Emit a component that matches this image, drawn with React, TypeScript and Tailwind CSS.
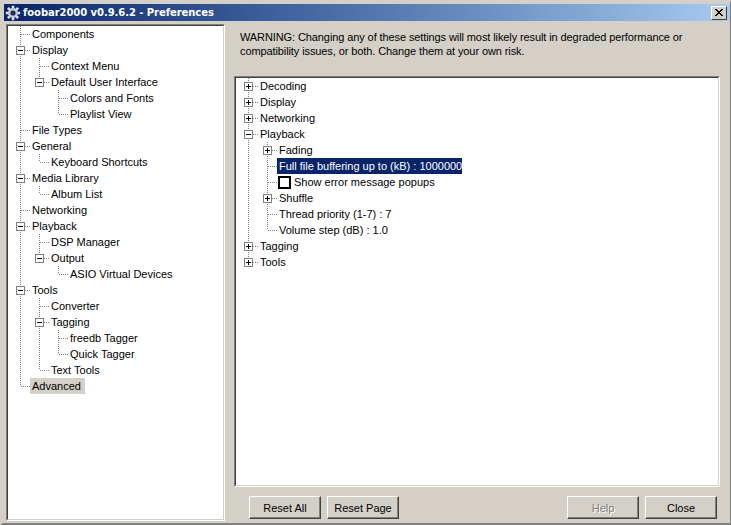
import type { ReactNode } from "react";

const FONT = "font-['Liberation_Sans',Arial,sans-serif]";

type Row = {
  label: string;
  // one flag per ancestor level: does that level's line carry on through this row
  guides: boolean[];
  last?: boolean;
  expander?: "plus" | "minus";
  selected?: "focus" | "dim";
  checkbox?: boolean;
};

const leftRows: Row[] = [
  { label: "Components", guides: [] },
  { label: "Display", guides: [], expander: "minus" },
  { label: "Context Menu", guides: [true] },
  { label: "Default User Interface", guides: [true], expander: "minus", last: true },
  { label: "Colors and Fonts", guides: [true, false] },
  { label: "Playlist View", guides: [true, false], last: true },
  { label: "File Types", guides: [] },
  { label: "General", guides: [], expander: "minus" },
  { label: "Keyboard Shortcuts", guides: [true], last: true },
  { label: "Media Library", guides: [], expander: "minus" },
  { label: "Album List", guides: [true], last: true },
  { label: "Networking", guides: [] },
  { label: "Playback", guides: [], expander: "minus" },
  { label: "DSP Manager", guides: [true] },
  { label: "Output", guides: [true], expander: "minus", last: true },
  { label: "ASIO Virtual Devices", guides: [true, false], last: true },
  { label: "Tools", guides: [], expander: "minus" },
  { label: "Converter", guides: [true] },
  { label: "Tagging", guides: [true], expander: "minus" },
  { label: "freedb Tagger", guides: [true, true] },
  { label: "Quick Tagger", guides: [true, true], last: true },
  { label: "Text Tools", guides: [true], last: true },
  { label: "Advanced", guides: [], last: true, selected: "dim" },
];

const rightRows: Row[] = [
  { label: "Decoding", guides: [], expander: "plus" },
  { label: "Display", guides: [], expander: "plus" },
  { label: "Networking", guides: [], expander: "plus" },
  { label: "Playback", guides: [], expander: "minus" },
  { label: "Fading", guides: [true], expander: "plus" },
  { label: "Full file buffering up to (kB) : 1000000", guides: [true], selected: "focus" },
  { label: "Show error message popups", guides: [true], checkbox: true },
  { label: "Shuffle", guides: [true], expander: "plus" },
  { label: "Thread priority (1-7) : 7", guides: [true] },
  { label: "Volume step (dB) : 1.0", guides: [true], last: true },
  { label: "Tagging", guides: [], expander: "plus" },
  { label: "Tools", guides: [], expander: "plus", last: true },
];

function GuideCell({ through }: { through: boolean }) {
  return (
    <svg width="19" height="16" className="block shrink-0" shapeRendering="crispEdges">
      {through && <path d="M9.5 0V16" stroke="#808080" strokeDasharray="1 1" />}
    </svg>
  );
}

function BranchCell({ row }: { row: Row }) {
  return (
    <svg width="19" height="16" className="block shrink-0" shapeRendering="crispEdges">
      <path d={`M9.5 0V${row.last ? 8 : 16}`} stroke="#808080" strokeDasharray="1 1" />
      <path d="M10 8.5H19" stroke="#808080" strokeDasharray="1 1" />
      {row.expander && (
        <>
          <rect x="5.5" y="4.5" width="8" height="8" fill="#fff" stroke="#808080" />
          <path d="M7 8.5H12" stroke="#000" />
          {row.expander === "plus" && <path d="M9.5 6V11" stroke="#000" />}
        </>
      )}
    </svg>
  );
}

function Tree({ rows }: { rows: Row[] }) {
  return (
    <div className="pl-[3px]">
      {rows.map((row, i) => (
        <div key={i} className="flex h-4 items-center">
          {row.guides.map((through, g) => (
            <GuideCell key={g} through={through} />
          ))}
          <BranchCell row={row} />
          {row.checkbox && (
            <span className="ml-px mr-px h-[13px] w-[13px] shrink-0 border-2 border-black bg-white" />
          )}
          <span
            className={
              "flex h-4 items-center whitespace-nowrap pl-0.5 " +
              (row.selected === "focus"
                ? "bg-[#0a246a] text-white"
                : row.selected === "dim"
                  ? "bg-[#d4d0c8] pr-1 text-black"
                  : "text-black")
            }
          >
            {row.label}
          </span>
        </div>
      ))}
    </div>
  );
}

function Sunken({ className, children }: { className: string; children: ReactNode }) {
  return (
    <div
      className={
        "shrink-0 border border-b-white border-l-[#808080] border-r-white border-t-[#808080] " + className
      }
    >
      <div className="h-full border border-b-[#d4d0c8] border-l-[#404040] border-r-[#d4d0c8] border-t-[#404040] bg-white">
        {children}
      </div>
    </div>
  );
}

function DialogButton({ label, disabled }: { label: string; disabled?: boolean }) {
  return (
    <button
      className={
        "flex h-[23px] w-[72px] items-center justify-center border border-b-[#404040] border-l-white border-r-[#404040] border-t-white bg-[#d4d0c8] shadow-[inset_-1px_-1px_0_#808080] " +
        (disabled ? "text-[#808080] [text-shadow:1px_1px_0_#fff]" : "text-black")
      }
    >
      {label}
    </button>
  );
}

function Gear() {
  return (
    <svg width="16" height="16" viewBox="0 0 16 16" className="block shrink-0">
      <path
        d="M8 .8V15.2M.8 8H15.2M2.9 2.9L13.1 13.1M13.1 2.9L2.9 13.1"
        stroke="#e2e2ea"
        strokeWidth="2.6"
      />
      <circle cx="8" cy="8" r="5" fill="#c8c8d4" />
      <circle cx="8" cy="8" r="2.6" fill="#1c2c5c" />
    </svg>
  );
}

export default function App() {
  return (
    <div
      className={`${FONT} flex h-[525px] w-[731px] flex-col overflow-hidden border-b-2 border-l-[3px] border-r border-t-[3px] border-b-[#808080] border-l-[#d4d0c8] border-r-[#808080] border-t-[#d4d0c8] bg-[#d4d0c8] text-[11px] leading-4`}
    >
      <div className="ml-px mt-px flex h-[17px] shrink-0 items-center bg-gradient-to-r from-[#0a246a] to-[#a6caf0] pl-px pr-[3px]">
        <Gear />
        <span className="ml-0.5 font-['DejaVu_Sans',sans-serif] text-[10px] font-bold tracking-[-0.06px] text-white">
          foobar2000 v0.9.6.2 - Preferences
        </span>
        <button className="ml-auto flex h-[14px] w-4 items-center justify-center border border-b-[#404040] border-l-white border-r-[#404040] border-t-white bg-[#d4d0c8]">
          <svg width="8" height="7" shapeRendering="crispEdges">
            <path d="M0 0H2V1H3V2H5V1H6V0H8V1H7V2H6V3H5V4H6V5H7V6H8V7H6V6H5V5H3V6H2V7H0V6H1V5H2V4H3V3H2V2H1V1H0Z" fill="#000" />
          </svg>
        </button>
      </div>
      <div className="flex min-h-0 flex-1 pl-[3px] pt-[3px]">
        <Sunken className="h-[497px] w-[219px]">
          <Tree rows={leftRows} />
        </Sunken>
        <div className="ml-[9px] flex min-w-0 flex-1 flex-col pr-[10px]">
          <p className="pl-1.5 pt-1.5 leading-[14px] tracking-[-0.1px] text-black">
            WARNING: Changing any of these settings will most likely result in degraded performance or
            <br />
            compatibility issues, or both. Change them at your own risk.
          </p>
          <Sunken className="mt-[18px] h-[411px] w-[486px]">
            <Tree rows={rightRows} />
          </Sunken>
          <div className="mt-[9px] flex pl-[15px] pr-[3px]">
            <div className="flex gap-[6px]">
              <DialogButton label="Reset All" />
              <DialogButton label="Reset Page" />
            </div>
            <div className="ml-auto flex gap-[6px]">
              <DialogButton label="Help" disabled />
              <DialogButton label="Close" />
            </div>
          </div>
        </div>
      </div>
    </div>
  );
}
